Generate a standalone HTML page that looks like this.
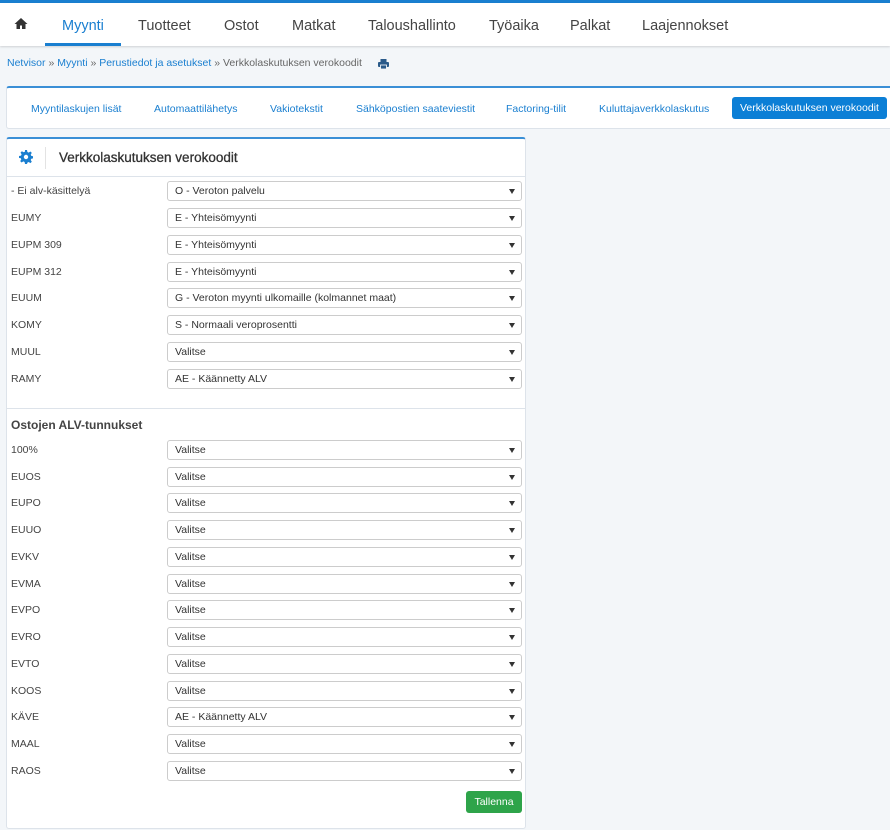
<!DOCTYPE html>
<html><head><meta charset="utf-8"><style>
*{box-sizing:border-box;margin:0;padding:0}
body{width:890px;height:830px;background:#f3f6f9;font-family:"Liberation Sans",sans-serif;position:relative;overflow:hidden;font-size:11px;color:#333}
.top{position:absolute;left:0;top:0;width:890px;height:3px;background:#1a7fd0}
.nav{position:absolute;left:0;top:3px;width:890px;height:43px;background:#fff;box-shadow:0 1px 2px rgba(0,0,0,.15)}
.nav span{position:absolute;top:15px;font-size:14.5px;color:#444}
.nav .act{color:#1a7fd0}
.ul{position:absolute;left:45px;top:41px;width:76px;height:3px;background:#1a7fd0}
.bc{position:absolute;left:7px;top:57px;font-size:10.5px;color:#1a7fd0}
.bc .g{color:#666}
.tabs{position:absolute;left:6px;top:86px;width:890px;height:43px;background:#fff;border:1px solid #dde3ea;border-top:2px solid #3a8fd6;border-radius:3px}
.tabs span{position:absolute;top:15px;font-size:10.5px;color:#1a7fd0}
.tabs .btn{top:9px;left:725px;background:#0c7fd6;color:#fff;padding:5px 8px;border-radius:3px;height:22px}
.panel{position:absolute;left:6px;top:137px;width:520px;height:692px;background:#fff;border:1px solid #dde3ea;border-top:2px solid #3a8fd6;border-radius:3px}
.hdr{position:absolute;left:0;top:0;width:518px;height:38px;border-bottom:1px solid #dde3ea}
.hdr .t{position:absolute;left:52px;top:11px;font-size:13.5px;color:#333;font-weight:normal;-webkit-text-stroke:0.3px #333}
.hdr .sep{position:absolute;left:38px;top:8px;width:1px;height:22px;background:#e3e3e3}
.row{position:absolute;left:0;width:518px;height:20px}
.row .l{position:absolute;left:4px;top:4px;font-size:10.5px;color:#444}
.row .s{position:absolute;left:160px;top:0;width:355px;height:20px;border:1px solid #ccc;border-radius:3px;padding:3px 7px;font-size:10.5px;color:#333}
.row .s:after{content:"";position:absolute;right:6px;top:7px;border-left:3px solid transparent;border-right:3px solid transparent;border-top:5px solid #333}
.div{position:absolute;left:0;top:269px;width:518px;height:1px;background:#dde3ea}
.sec{position:absolute;left:4px;top:279px;font-size:12px;font-weight:bold;color:#444}
.save{position:absolute;left:459px;top:652px;width:56px;height:22px;background:#2ea44a;border-radius:3px;color:#fff;font-size:10.5px;text-align:center;line-height:22px}
</style></head><body>
<div class="top"></div>
<div class="nav">
<svg style="position:absolute;left:14px;top:14px" width="14" height="13" viewBox="0 0 14 13"><path d="M7 1L0.5 7h2v5h3.5V8.5h2V12H11.5V7h2z" fill="#333"/></svg>
<span class="act" style="left:62px">Myynti</span>
<span style="left:138px">Tuotteet</span>
<span style="left:224px">Ostot</span>
<span style="left:292px">Matkat</span>
<span style="left:368px">Taloushallinto</span>
<span style="left:489px">Työaika</span>
<span style="left:570px">Palkat</span>
<span style="left:642px">Laajennokset</span>
<div class="ul" style="top:40px"></div>
</div>
<div class="bc">Netvisor <span class="g">»</span> Myynti <span class="g">»</span> Perustiedot ja asetukset <span class="g">» Verkkolaskutuksen verokoodit</span></div>
<svg style="position:absolute;left:378px;top:59px" width="11" height="10" viewBox="0 0 11 10"><rect x="2.5" y="0" width="6" height="3" fill="#2a5a8a"/><rect x="0" y="3" width="11" height="5" rx="1" fill="#2a5a8a"/><rect x="2.5" y="6" width="6" height="4" fill="#2a5a8a" stroke="#fff" stroke-width=".8"/></svg>
<div class="tabs">
<span style="left:24px">Myyntilaskujen lisät</span>
<span style="left:147px">Automaattilähetys</span>
<span style="left:263px">Vakiotekstit</span>
<span style="left:349px">Sähköpostien saateviestit</span>
<span style="left:499px">Factoring-tilit</span>
<span style="left:592px">Kuluttajaverkkolaskutus</span>
<span class="btn">Verkkolaskutuksen verokoodit</span>
</div>
<div class="panel">
<div class="hdr">
<svg style="position:absolute;left:12px;top:11px" width="14" height="14" viewBox="0 0 14 14"><path d="M6 0h2l.4 2 1.3.6 1.7-1.1 1.4 1.4-1.1 1.7.6 1.3 2 .4v2l-2 .4-.6 1.3 1.1 1.7-1.4 1.4-1.7-1.1-1.3.6L8 14H6l-.4-2-1.3-.6-1.7 1.1-1.4-1.4 1.1-1.7L1.7 8.1 0 8V6l2-.4.6-1.3-1.1-1.7 1.4-1.4 1.7 1.1 1.3-.6z" fill="#1a7fd0"/><circle cx="7" cy="7" r="2.2" fill="#fff"/></svg>
<div class="sep"></div>
<div class="t">Verkkolaskutuksen verokoodit</div>
</div>
<div class="row" style="top:42px"><div class="l">- Ei alv-käsittelyä</div><div class="s">O - Veroton palvelu</div></div>
<div class="row" style="top:69px"><div class="l">EUMY</div><div class="s">E - Yhteisömyynti</div></div>
<div class="row" style="top:96px"><div class="l">EUPM 309</div><div class="s">E - Yhteisömyynti</div></div>
<div class="row" style="top:123px"><div class="l">EUPM 312</div><div class="s">E - Yhteisömyynti</div></div>
<div class="row" style="top:149px"><div class="l">EUUM</div><div class="s">G - Veroton myynti ulkomaille (kolmannet maat)</div></div>
<div class="row" style="top:176px"><div class="l">KOMY</div><div class="s">S - Normaali veroprosentti</div></div>
<div class="row" style="top:203px"><div class="l">MUUL</div><div class="s">Valitse</div></div>
<div class="row" style="top:230px"><div class="l">RAMY</div><div class="s">AE - Käännetty ALV</div></div>
<div class="div"></div>
<div class="sec">Ostojen ALV-tunnukset</div>
<div class="row" style="top:301px"><div class="l">100%</div><div class="s">Valitse</div></div>
<div class="row" style="top:328px"><div class="l">EUOS</div><div class="s">Valitse</div></div>
<div class="row" style="top:354px"><div class="l">EUPO</div><div class="s">Valitse</div></div>
<div class="row" style="top:381px"><div class="l">EUUO</div><div class="s">Valitse</div></div>
<div class="row" style="top:408px"><div class="l">EVKV</div><div class="s">Valitse</div></div>
<div class="row" style="top:435px"><div class="l">EVMA</div><div class="s">Valitse</div></div>
<div class="row" style="top:461px"><div class="l">EVPO</div><div class="s">Valitse</div></div>
<div class="row" style="top:488px"><div class="l">EVRO</div><div class="s">Valitse</div></div>
<div class="row" style="top:515px"><div class="l">EVTO</div><div class="s">Valitse</div></div>
<div class="row" style="top:542px"><div class="l">KOOS</div><div class="s">Valitse</div></div>
<div class="row" style="top:568px"><div class="l">KÄVE</div><div class="s">AE - Käännetty ALV</div></div>
<div class="row" style="top:595px"><div class="l">MAAL</div><div class="s">Valitse</div></div>
<div class="row" style="top:622px"><div class="l">RAOS</div><div class="s">Valitse</div></div>
<div class="save">Tallenna</div>
</div>
</body></html>
